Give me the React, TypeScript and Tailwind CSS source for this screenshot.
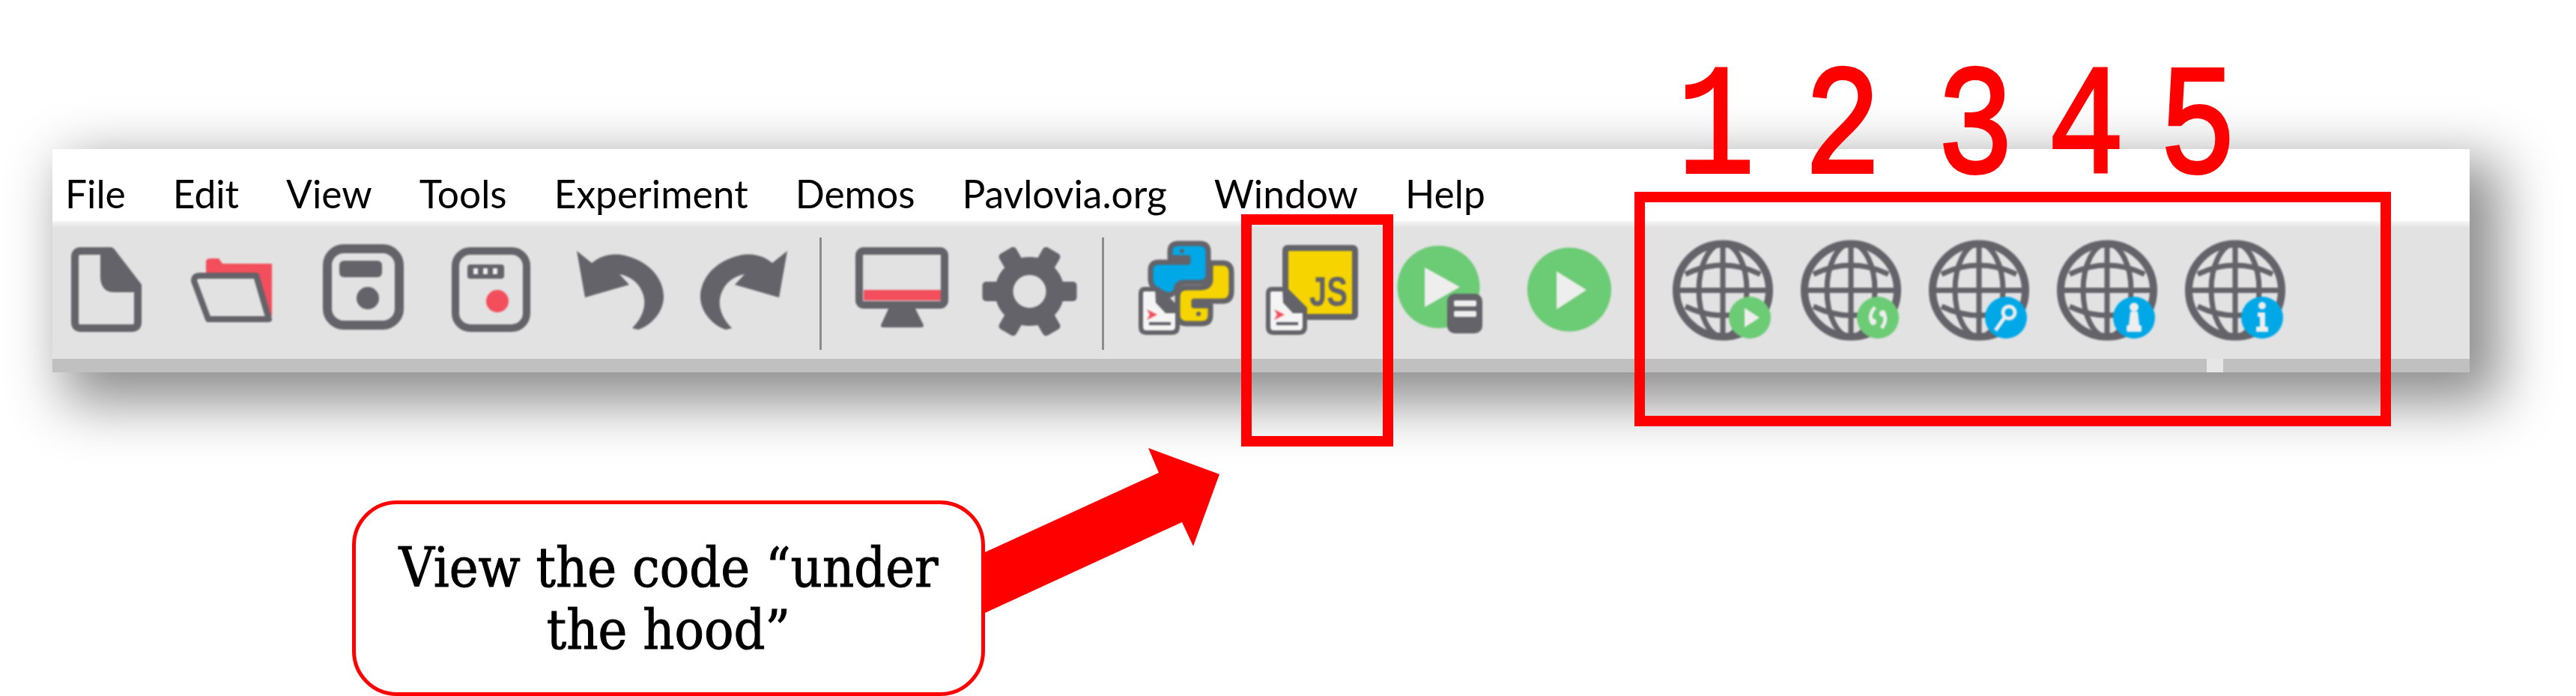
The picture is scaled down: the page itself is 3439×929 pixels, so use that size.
const menu = ["File", "Edit", "View", "Tools", "Experiment", "Demos", "Pavlovia.org", "Window", "Help"];

const DARK = "#636369";
const RED = "#f24e5b";
const GREEN = "#6ccb75";
const BLUE = "#00a8e8";
const YELLOW = "#f5d400";
const PALE = "#eeeeee";

function Slot({ children, className = "" }: { children: React.ReactNode; className?: string }) {
  return (
    <svg viewBox="0 0 140 175" className={`h-[175px] w-[140px] shrink-0 blur-[1px] ${className}`}>
      {children}
    </svg>
  );
}

function NewIcon() {
  return (
    <Slot>
      <path d="M36 31H76L112 78V126Q112 134 104 134H36Q28 134 28 126V39Q28 31 36 31Z" fill="none" stroke={DARK} strokeWidth="10" strokeLinejoin="round" />
      <path d="M62 28H80L117 76V86H80Q64 86 62 68Z" fill={DARK} />
    </Slot>
  );
}

function OpenIcon() {
  return (
    <Slot>
      <path d="M33 62V45Q33 41 40 41H50L55 48H121V118H100Z" fill={RED} />
      <path d="M17 71Q17 64 25 64H100L117 122H36Z" fill="#e2e2e2" stroke={DARK} strokeWidth="8" strokeLinejoin="round" />
    </Slot>
  );
}

function SaveIcon() {
  return (
    <Slot>
      <rect x="25" y="28" width="96" height="102" rx="22" fill="none" stroke={DARK} strokeWidth="12" />
      <rect x="41" y="44" width="57" height="22" rx="6" fill={DARK} />
      <circle cx="79" cy="94" r="15" fill={DARK} />
    </Slot>
  );
}

function SaveAsIcon() {
  return (
    <Slot>
      <rect x="26" y="31" width="95" height="103" rx="20" fill="none" stroke={DARK} strokeWidth="10" />
      <rect x="42" y="49" width="49" height="19" rx="4" fill={DARK} />
      <rect x="50" y="54" width="6" height="8" fill={PALE} />
      <rect x="63" y="54" width="6" height="8" fill={PALE} />
      <rect x="76" y="54" width="6" height="8" fill={PALE} />
      <circle cx="82" cy="98" r="15" fill={RED} />
    </Slot>
  );
}

const undoPath =
  "M18 31L38 47C55 33 75 33 92 40C120 50 134 72 134 92C134 112 118 130 100 136L92 134C108 118 112 100 105 85C100 73 90 65 75 62L88 76L29 93Z";

function UndoIcon() {
  return (
    <Slot>
      <path d={undoPath} fill={DARK} />
    </Slot>
  );
}

function RedoIcon() {
  return (
    <Slot>
      <path d={undoPath} fill={DARK} transform="translate(147 0) scale(-1 1)" />
    </Slot>
  );
}

function MonitorIcon() {
  return (
    <Slot>
      <path d="M54 104H86L99 130Q99 133 96 133H45Q42 133 42 130Z" fill={DARK} />
      <rect x="13" y="31" width="114" height="72" rx="6" fill="#e2e2e2" stroke={DARK} strokeWidth="10" />
      <rect x="19" y="83" width="103" height="14" fill={RED} />
    </Slot>
  );
}

function GearIcon() {
  return (
    <Slot>
      <g transform="translate(70.5 85)">
        <circle r="34" fill="none" stroke={DARK} strokeWidth="24" />
        {[30, 90, 150, 210, 270, 330].map((a) => (
          <rect key={a} x="-13" y="-63" width="26" height="26" rx="5" fill={DARK} transform={`rotate(${a})`} />
        ))}
      </g>
    </Slot>
  );
}

// small script page that sits on the Python and JS icons
function DocBadge() {
  return (
    <>
      <path d="M16 82H34L60 108V132Q60 140 52 140H18Q11 140 11 132V88Q11 82 16 82Z" fill="#f4f4f4" stroke={DARK} strokeWidth="6" />
      <path d="M30 80L62 108V114H44L31 100Z" fill={DARK} />
      <path d="M19 109L33 116L19 123L23 116Z" fill={RED} />
      <rect x="22" y="126" width="29" height="4" fill={DARK} />
    </>
  );
}

function PythonIcon() {
  return (
    <Slot>
      <path
        d="M50 32Q50 21 61 21H90Q101 21 101 32V62Q101 73 90 73H70Q58 73 58 85L50 90Q25 84 24 70V57Q24 46 35 46H74V40H50Z"
        fill={BLUE}
        stroke={DARK}
        strokeWidth="7"
        strokeLinejoin="round"
      />
      <circle cx="66" cy="31" r="3" fill={DARK} />
      <path
        d="M104 47H120Q132 47 132 60V85Q132 98 120 98H82V104H104V117Q104 128 92 128H72Q60 128 60 116V92Q60 80 72 80H90Q104 80 104 68Z"
        fill={YELLOW}
        stroke={DARK}
        strokeWidth="7"
        strokeLinejoin="round"
      />
      <circle cx="88" cy="115" r="3" fill={DARK} />
      <DocBadge />
    </Slot>
  );
}

function JsIcon() {
  return (
    <Slot>
      <rect x="34" y="27" width="93" height="92" rx="3" fill={YELLOW} stroke={DARK} strokeWidth="8" />
      <text x="66" y="104" textLength="51" lengthAdjust="spacingAndGlyphs" fontFamily="Liberation Sans, sans-serif" fontWeight="700" fontSize="56" fill={DARK}>
        JS
      </text>
      <DocBadge />
    </Slot>
  );
}

function RunPyIcon() {
  return (
    <Slot>
      <circle cx="68.5" cy="79" r="55" fill={GREEN} />
      <path d="M50 53V106L97 79Z" fill={PALE} />
      <rect x="80" y="88" width="47" height="53" rx="10" fill={DARK} />
      <rect x="89" y="97" width="30" height="8" rx="2" fill={PALE} />
      <rect x="89" y="111" width="30" height="8" rx="2" fill={PALE} />
    </Slot>
  );
}

function RunIcon() {
  return (
    <Slot>
      <circle cx="73" cy="82.5" r="56" fill={GREEN} />
      <path d="M56 58V109L96 83Z" fill={PALE} />
    </Slot>
  );
}

function GlobeIcon({ color, children }: { color: string; children: React.ReactNode }) {
  return (
    <Slot>
      <g fill="none" stroke={DARK}>
        <circle cx="70" cy="83.5" r="62" strokeWidth="10" />
        <ellipse cx="70" cy="83.5" rx="32" ry="62" strokeWidth="7" />
        <path d="M70 22V145M8 83.5H132" strokeWidth="7" />
        <path d="M20 62Q70 38 120 62M20 105Q70 129 120 105" strokeWidth="7" />
      </g>
      <g transform="translate(106 120)">
        <circle r="28" fill={color} />
        <g fill={PALE}>{children}</g>
      </g>
    </Slot>
  );
}

const globes = [
  { color: GREEN, glyph: <path d="M-7 -13V13L13 0Z" /> },
  {
    color: GREEN,
    glyph: (
      <g fill="none" stroke={PALE} strokeWidth="5">
        <path d="M-4 -14Q-12 -4 -9 3Q-8 9 -5 7Q-3 4 -8 3" />
        <path d="M5 14Q12 4 9 -3Q8 -9 5 -7Q3 -4 8 -3" />
      </g>
    ),
  },
  {
    color: BLUE,
    glyph: (
      <g fill="none" stroke={PALE} strokeWidth="5">
        <circle cx="4" cy="-7" r="8" />
        <path d="M-2 0L-14 17" />
      </g>
    ),
  },
  {
    color: BLUE,
    glyph: (
      <>
        <circle cy="-14" r="6" />
        <path d="M-5 -8H5L7 10H-7Z" />
        <rect x="-10" y="10" width="20" height="9" rx="2" />
      </>
    ),
  },
  {
    color: BLUE,
    glyph: (
      <>
        <circle cy="-16" r="5" />
        <path d="M-6 -7H4V12H8V19H-8V12H-3V-1H-6Z" />
      </>
    ),
  },
];

const digits = [
  { label: "1", pos: "left-[2228px]" },
  { label: "2", pos: "left-[2397px]" },
  { label: "3", pos: "left-[2574px]" },
  { label: "4", pos: "left-[2722px]" },
  { label: "5", pos: "left-[2871px]" },
];

function Separator({ className }: { className: string }) {
  return <div className={`h-[150px] w-[3px] shrink-0 bg-[#8c8c8c] ${className}`} />;
}

export default function App() {
  return (
    <div className="relative h-[929px] w-[3439px] overflow-hidden bg-white">
      {/* psychopy window */}
      <div className="ml-[70px] w-[3227px] pt-[199px]">
        <div className="shadow-[28px_28px_70px_12px_rgba(0,0,0,0.45)]">
          <div className="flex h-[96px] items-start gap-[63px] bg-white pl-[17px] pt-[24px] font-['Lato',sans-serif] text-[51.5px] leading-[70px] text-black">
            {menu.map((m) => (
              <span key={m}>{m}</span>
            ))}
          </div>
          <div className="h-[9px] bg-gradient-to-b from-[#f6f6f6] to-[#e2e2e2]" />
          <div className="flex h-[175px] items-center bg-[#e2e2e2] pl-[2px]">
            <div className="flex gap-[30px]">
              <NewIcon />
              <OpenIcon />
              <SaveIcon />
              <SaveAsIcon />
              <UndoIcon />
              <RedoIcon />
            </div>
            <Separator className="ml-[32px]" />
            <div className="ml-[37px] flex gap-[30px]">
              <MonitorIcon />
              <GearIcon />
            </div>
            <Separator className="ml-[27px]" />
            <div className="ml-[38px] flex gap-[30px]">
              <PythonIcon />
              <JsIcon />
              <RunPyIcon />
              <RunIcon />
            </div>
            <div className="ml-[68px] flex gap-[31px]">
              {globes.map((g, i) => (
                <GlobeIcon key={i} color={g.color}>
                  {g.glyph}
                </GlobeIcon>
              ))}
            </div>
          </div>
          <div className="flex h-[18px] bg-[#c0c0c0]">
            <div className="ml-[2876px] w-[22px] bg-[#e6e6e6]" />
          </div>
        </div>
      </div>

      {/* callout */}
      <svg viewBox="0 0 330 240" className="absolute left-[1310px] top-[590px] h-[240px] w-[330px]">
        <path d="M3 148L237 41L223 8L318 43L283 139L268 107L3 229Z" fill="#ff0000" />
      </svg>
      <div className="relative ml-[470px] mt-[171px] flex h-[261px] w-[845px] items-center justify-center rounded-[60px] border-[5px] border-[#ff0000] bg-white text-center font-['DejaVu_Serif_Condensed','DejaVu_Serif',serif] text-[73px] leading-[83px] text-black [-webkit-text-stroke:1px_#000000]">
        <p>
          View the code “under
          <br />
          the hood”
        </p>
      </div>

      {/* annotations */}
      <div className="absolute left-[1657px] top-[286px] h-[310px] w-[203px] border-[14px] border-[#ff0000]" />
      <div className="absolute left-[2182px] top-[256px] h-[313px] w-[1010px] border-[14px] border-[#ff0000]" />
      {digits.map((d) => (
        <span key={d.label} className={`absolute top-[69px] scale-x-[0.82] font-['Liberation_Mono',monospace] text-[210px] leading-none text-[#ff0000] [-webkit-text-stroke:4px_#ff0000] ${d.pos}`}>
          {d.label}
        </span>
      ))}
    </div>
  );
}
